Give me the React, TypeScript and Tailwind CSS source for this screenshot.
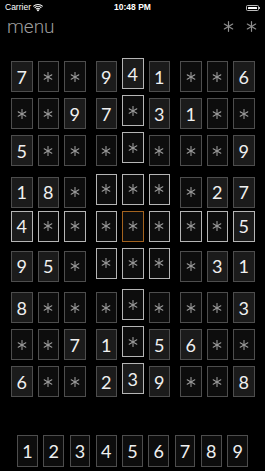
const BOARD = [
  "7**941**6",
  "**97*31**",
  "5*******9",
  "18*****27",
  "4*******5",
  "95*****31",
  "8*******3",
  "**71*56**",
  "6**239**8",
];

const SEL_ROW = 4;
const SEL_COL = 4;

function Star({ size = 10, color = "#9a9a9a" }: { size?: number; color?: string }) {
  return (
    <svg width={size} height={size} viewBox="0 0 10 10" fill="none" stroke={color} strokeWidth={1.1} strokeLinecap="round">
      <line x1="5" y1="0.6" x2="5" y2="9.4" />
      <line x1="1.2" y1="2.8" x2="8.8" y2="7.2" />
      <line x1="1.2" y1="7.2" x2="8.8" y2="2.8" />
    </svg>
  );
}

function Cell({ value, row, col }: { value: string; row: number; col: number }) {
  const selected = row === SEL_ROW && col === SEL_COL;
  const sameBox =
    Math.floor(row / 3) === Math.floor(SEL_ROW / 3) &&
    Math.floor(col / 3) === Math.floor(SEL_COL / 3);
  const highlighted = row === SEL_ROW || col === SEL_COL || sameBox;

  let border = "border-[#4d4d4d]";
  if (highlighted) border = "border-[#b5b5b5]";
  if (selected) border = "border-[#a3631f]";

  return (
    <div
      className={`flex h-[31px] w-[21.5px] items-center justify-center border ${border} ${
        value === "*" ? "bg-[#0d0d0d]" : "bg-[#1b1b1b]"
      } ${highlighted ? "-translate-y-[3px]" : ""}`}
    >
      {value === "*" ? (
        <Star />
      ) : (
        <span className="text-[18px] leading-none text-[#f0f0f0]">{value}</span>
      )}
    </div>
  );
}

function StatusBar() {
  return (
    <div className="flex h-[14px] items-center justify-between px-[5px] pt-[1px] text-[8.5px] text-white">
      <div className="flex w-[60px] items-center gap-[2px]">
        <span style={{ fontFamily: '"Liberation Sans", sans-serif' }}>Carrier</span>
        <svg width="10" height="8" viewBox="0 0 10 8" fill="white">
          <path d="M5 7.6 L3.6 6 A2 2 0 0 1 6.4 6 Z" />
          <path d="M2.6 4.9 A3.5 3.5 0 0 1 7.4 4.9 L6.8 5.6 A2.6 2.6 0 0 0 3.2 5.6 Z" />
          <path d="M1.3 3.5 A5.4 5.4 0 0 1 8.7 3.5 L8 4.2 A4.4 4.4 0 0 0 2 4.2 Z" />
          <path d="M0 2.1 A7.3 7.3 0 0 1 10 2.1 L9.4 2.8 A6.3 6.3 0 0 0 0.6 2.8 Z" />
        </svg>
      </div>
      <span className="font-semibold" style={{ fontFamily: '"Liberation Sans", sans-serif' }}>
        10:48 PM
      </span>
      <div className="flex w-[60px] justify-end">
        <div className="flex items-center">
          <div className="h-[6px] w-[13px] rounded-[1.5px] border border-[#bbb] p-[1px]">
            <div className="h-full w-full rounded-[0.5px] bg-white" />
          </div>
          <div className="h-[2px] w-[1px] bg-[#bbb]" />
        </div>
      </div>
    </div>
  );
}

export default function App() {
  const blocks = [0, 1, 2];

  return (
    <div
      className="h-[471px] w-[265px] overflow-hidden bg-black"
      style={{ fontFamily: 'Lato, "Noto Sans", sans-serif' }}
    >
      <StatusBar />

      <div className="flex h-[24px] items-center justify-between pl-[7px] pr-[8px]">
        <span
          className="text-[19px] font-light leading-none text-[#9d9d9d]"
          style={{ fontFamily: 'Roboto, sans-serif' }}
        >
          menu
        </span>
        <div className="flex items-center gap-[12px]">
          <Star size={11} color="#8f8f8f" />
          <Star size={11} color="#8f8f8f" />
        </div>
      </div>

      <div className="mt-[23px] flex flex-col gap-[10.5px] pl-[11px]">
        {blocks.map((b) => (
          <div key={b} className="flex flex-col gap-[6px]">
            {[0, 1, 2].map((r) => {
              const row = b * 3 + r;
              return (
                <div key={row} className="flex gap-[10px]">
                  {blocks.map((cb) => (
                    <div key={cb} className="flex gap-[5px]">
                      {[0, 1, 2].map((c) => {
                        const col = cb * 3 + c;
                        return <Cell key={col} value={BOARD[row][col]} row={row} col={col} />;
                      })}
                    </div>
                  ))}
                </div>
              );
            })}
          </div>
        ))}
      </div>

      <div className="mt-[38px] flex justify-center gap-[5.6px]">
        {[1, 2, 3, 4, 5, 6, 7, 8, 9].map((n) => (
          <div
            key={n}
            className="flex h-[32px] w-[20.7px] items-center justify-center border border-[#4d4d4d] bg-[#0d0d0d]"
          >
            <span className="text-[18px] leading-none text-[#f0f0f0]">{n}</span>
          </div>
        ))}
      </div>
    </div>
  );
}
